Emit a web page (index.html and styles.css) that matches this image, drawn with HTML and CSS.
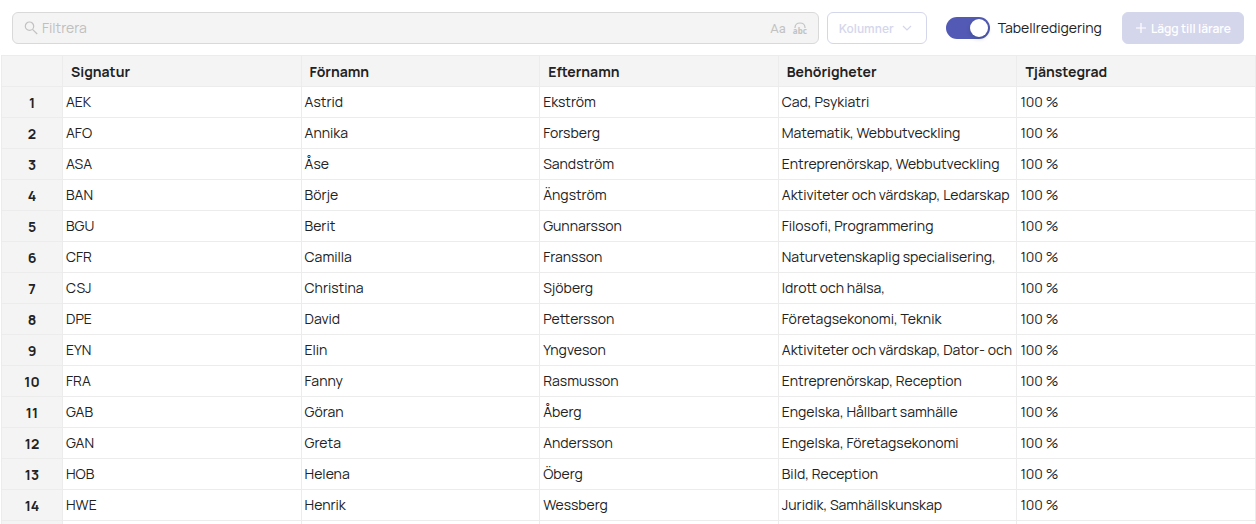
FILE: index.html
```
<!DOCTYPE html>
<html lang="sv">
<head>
    <meta charset="UTF-8">
    <meta name="viewport" content="width=device-width, initial-scale=1.0">
    <title>Lärare</title>
    <link rel="stylesheet" href="styles.css">
</head>
<body>
    <div class="panel">
        <div class="toolbar">
            <div class="filter">
                <svg class="search-icon" viewBox="0 0 14 14" aria-hidden="true">
                    <circle cx="5.5" cy="5.2" r="4.2"/>
                    <path d="M8.5 8.4L13.2 13"/>
                </svg>
                <input type="text" class="filter-input" placeholder="Filtrera" aria-label="Filtrera" disabled>
                <button type="button" class="option" aria-label="Skiftlägeskänslig" disabled>Aa</button>
                <button type="button" class="option whole-word" aria-label="Hela ord" disabled>
                    <svg viewBox="0 0 12 6" aria-hidden="true"><path d="M1 6V5.5C1 2.8 3.2 1 6 1s5 1.8 5 4.5V6"/></svg>
                    <span>abc</span>
                </button>
            </div>
            <button type="button" class="button button-outline" disabled>
                Kolumner
                <svg class="chevron" viewBox="0 0 10 6" aria-hidden="true"><path d="M1 1l4 4 4-4"/></svg>
            </button>
            <label class="toggle">
                <input type="checkbox" class="switch" checked>
                Tabellredigering
            </label>
            <button type="button" class="button button-primary" disabled>
                <svg class="plus" viewBox="0 0 10 10" aria-hidden="true"><path d="M5 0v10M0 5h10"/></svg>
                Lägg till lärare
            </button>
        </div>

        <table class="sheet">
            <thead>
                <tr><th class="number"></th><th>Signatur</th><th>Förnamn</th><th>Efternamn</th><th>Behörigheter</th><th>Tjänstegrad</th></tr>
            </thead>
            <tbody>
                <tr><th class="number">1</th><td>AEK</td><td>Astrid</td><td>Ekström</td><td>Cad, Psykiatri</td><td>100 %</td></tr>
                <tr><th class="number">2</th><td>AFO</td><td>Annika</td><td>Forsberg</td><td>Matematik, Webbutveckling</td><td>100 %</td></tr>
                <tr><th class="number">3</th><td>ASA</td><td>Åse</td><td>Sandström</td><td>Entreprenörskap, Webbutveckling</td><td>100 %</td></tr>
                <tr><th class="number">4</th><td>BAN</td><td>Börje</td><td>Ängström</td><td>Aktiviteter och värdskap, Ledarskap</td><td>100 %</td></tr>
                <tr><th class="number">5</th><td>BGU</td><td>Berit</td><td>Gunnarsson</td><td>Filosofi, Programmering</td><td>100 %</td></tr>
                <tr><th class="number">6</th><td>CFR</td><td>Camilla</td><td>Fransson</td><td>Naturvetenskaplig specialisering,</td><td>100 %</td></tr>
                <tr><th class="number">7</th><td>CSJ</td><td>Christina</td><td>Sjöberg</td><td>Idrott och hälsa,</td><td>100 %</td></tr>
                <tr><th class="number">8</th><td>DPE</td><td>David</td><td>Pettersson</td><td>Företagsekonomi, Teknik</td><td>100 %</td></tr>
                <tr><th class="number">9</th><td>EYN</td><td>Elin</td><td>Yngveson</td><td>Aktiviteter och värdskap, Dator- och</td><td>100 %</td></tr>
                <tr><th class="number">10</th><td>FRA</td><td>Fanny</td><td>Rasmusson</td><td>Entreprenörskap, Reception</td><td>100 %</td></tr>
                <tr><th class="number">11</th><td>GAB</td><td>Göran</td><td>Åberg</td><td>Engelska, Hållbart samhälle</td><td>100 %</td></tr>
                <tr><th class="number">12</th><td>GAN</td><td>Greta</td><td>Andersson</td><td>Engelska, Företagsekonomi</td><td>100 %</td></tr>
                <tr><th class="number">13</th><td>HOB</td><td>Helena</td><td>Öberg</td><td>Bild, Reception</td><td>100 %</td></tr>
                <tr><th class="number">14</th><td>HWE</td><td>Henrik</td><td>Wessberg</td><td>Juridik, Samhällskunskap</td><td>100 %</td></tr>
                <tr><th class="number"></th><td></td><td></td><td></td><td></td><td></td></tr>
            </tbody>
        </table>
    </div>
</body>
</html>
```
FILE: styles.css
```
* {
    box-sizing: border-box;
}
body {
    margin: 0;
    font-family: Manrope, Inter, "Liberation Sans", sans-serif;
    font-size: 14px;
    line-height: 20px;
    color: #222;
    background-color: #fff;
}
.panel {
    height: 100vh;
    overflow: hidden;
    padding-left: 1px;
}
button, input {
    font-family: inherit;
}
svg {
    fill: none;
    stroke: currentColor;
    stroke-width: 1.2;
}

/* Toolbar */
.toolbar {
    display: flex;
    align-items: center;
    gap: 8px;
    padding: 12px 12px 11px 11px;
}
.filter {
    display: flex;
    flex: 1;
    align-items: center;
    height: 32px;
    padding: 0 11px;
    border: 1px solid #d9d9d9;
    border-radius: 6px;
    background-color: #f4f4f4;
    color: #c2c2c2;
}
.search-icon {
    width: 14px;
    height: 14px;
    margin-right: 4px;
}
.filter-input {
    flex: 1;
    min-width: 0;
    height: 20px;
    padding: 0 0 1px;
    border: none;
    background: none;
    font-size: 14px;
}
.filter-input::placeholder {
    color: #bfbfbf;
}
.option {
    padding: 0;
    border: none;
    background: none;
    color: #c2c2c2;
    font-family: Roboto, sans-serif;
    font-size: 13px;
}
.whole-word {
    display: flex;
    flex-direction: column;
    align-items: center;
    margin-left: 7px;
    font-family: "Noto Sans", sans-serif;
    font-size: 8px;
    font-weight: bold;
    line-height: 6px;
}
.whole-word svg {
    width: 12px;
    height: 6px;
}
.button {
    display: flex;
    align-items: center;
    height: 32px;
    border: 1px solid #d4d6ec;
    border-radius: 6px;
    font-size: 12px;
}
.button-outline {
    gap: 8px;
    padding: 0 14px 0 11px;
    background-color: #fff;
    color: #d4d6ec;
    font-family: Inter, sans-serif;
    font-weight: 500;
}
.chevron {
    width: 10px;
    height: 6px;
}
.button-primary {
    gap: 5px;
    padding: 0 12px 0 13px;
    background-color: #d4d6ec;
    color: #fff;
    font-weight: 600;
}
.plus {
    width: 10px;
    height: 10px;
}
.toggle {
    display: flex;
    align-items: center;
    gap: 8px;
    margin: 0 12px 0 11px;
}
.switch {
    display: flex;
    appearance: none;
    width: 44px;
    height: 22px;
    margin: 0;
    padding: 2px;
    border-radius: 11px;
    background-color: #bfbfbf;
}
.switch::before {
    content: "";
    width: 18px;
    height: 18px;
    border-radius: 50%;
    background-color: #fff;
    box-shadow: 0 2px 4px rgba(0, 35, 11, 0.2);
}
.switch:checked {
    justify-content: flex-end;
    background-color: #525ab5;
}

/* Table */
.sheet {
    width: 100%;
    table-layout: fixed;
    border-collapse: collapse;
}
.sheet th, .sheet td {
    height: 31px;
    border: 1px solid #ececec;
    overflow: hidden;
    text-align: left;
    white-space: nowrap;
}
.sheet th {
    padding: 1px 8px 0;
    background-color: #f4f4f4;
    font-weight: 700;
}
.sheet td {
    padding: 0 3px;
}
.sheet .number {
    width: 61px;
    text-align: center;
}
```
